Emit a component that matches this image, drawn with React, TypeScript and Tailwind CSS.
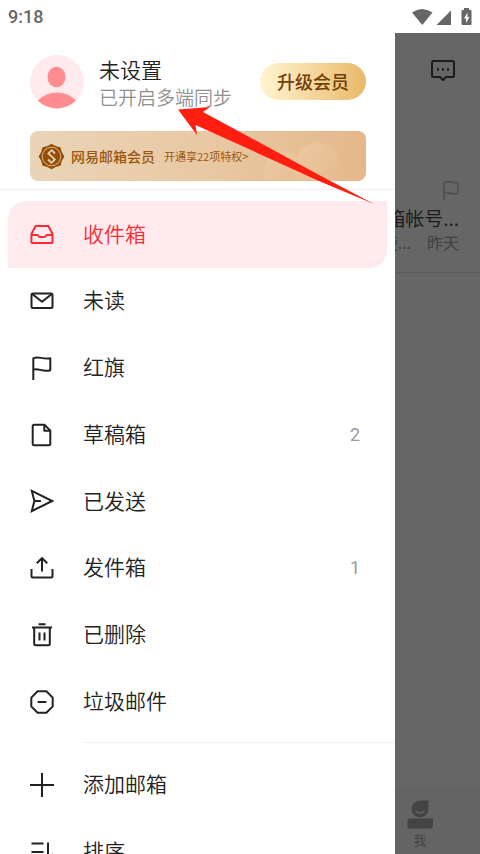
import type { ReactNode } from 'react';

type Folder = {
  name: string;
  icon: ReactNode;
  count?: number;
  active?: boolean;
};

function Icon({ children }: { children: ReactNode }) {
  return (
    <svg
      className="h-6 w-6 shrink-0"
      viewBox="0 0 24 24"
      fill="none"
      stroke="currentColor"
      strokeWidth="2"
      strokeLinejoin="round"
      aria-hidden="true"
    >
      {children}
    </svg>
  );
}

const folders: Folder[] = [
  {
    name: '收件箱',
    active: true,
    icon: (
      <Icon>
        <path d="M5.600 4h12.800L22.500 12v7.400a1.600 1.600 0 0 1-1.600 1.600H3a1.600 1.600 0 0 1-1.600-1.600V12z" />
        <path d="M1.400 13h6.200c.600 0 .900 2 2.200 2h4.600c1.300 0 1.600-2 2.200-2h6" />
      </Icon>
    ),
  },
  {
    name: '未读',
    icon: (
      <Icon>
        <rect x="1.500" y="4.500" width="21" height="14.500" rx="1.500" />
        <path d="M2.500 5.200l9.500 7.500 9.500-7.500" />
      </Icon>
    ),
  },
  {
    name: '红旗',
    icon: (
      <Icon>
        <path d="M3.300 24V2.300c5-2.800 9 1.500 17 0v11.900c-8 2.300-11.500-2.600-17-.600" />
      </Icon>
    ),
  },
  {
    name: '草稿箱',
    count: 2,
    icon: (
      <Icon>
        <path d="M14.500 1.800H4.200a1.500 1.500 0 0 0-1.500 1.500v17.400a1.500 1.500 0 0 0 1.500 1.500h14.600a1.500 1.500 0 0 0 1.500-1.500V7.600z" />
        <path d="M14.300 1.800v6h6" />
      </Icon>
    ),
  },
  {
    name: '已发送',
    icon: (
      <Icon>
        <path d="M1.800 1.900L22.200 12 1.800 22.100l2.600-10.100zM4.400 12h6.500" strokeLinejoin="miter" />
      </Icon>
    ),
  },
  {
    name: '发件箱',
    count: 1,
    icon: (
      <Icon>
        <path d="M1.500 13v7a1.500 1.500 0 0 0 1.500 1.500h18a1.500 1.500 0 0 0 1.500-1.500v-7M12 15.500V3M6.800 7.300L12 2.100l5.200 5.200" strokeLinejoin="miter" />
      </Icon>
    ),
  },
  {
    name: '已删除',
    icon: (
      <Icon>
        <path d="M8.500 1.200h7M2 4.500h20M4.200 4.500v16.300a1.500 1.500 0 0 0 1.500 1.500h12.600a1.500 1.500 0 0 0 1.500-1.500V4.500M9.500 9.500v8M14.500 9.500v8" />
      </Icon>
    ),
  },
  {
    name: '垃圾邮件',
    icon: (
      <Icon>
        <path d="M7.600 1.300h8.800l6.300 6.300v8.800l-6.300 6.300H7.600l-6.300-6.300V7.600zM7.600 12h8.800" />
      </Icon>
    ),
  },
];

const actions: Folder[] = [
  {
    name: '添加邮箱',
    icon: (
      <Icon>
        <path d="M12 0v24M0 12h24" />
      </Icon>
    ),
  },
  {
    name: '排序',
    icon: (
      <Icon>
        <path d="M1.500 3.500h12M1.500 12h12M1.500 20.500h12M18 2.500v18.500l5-7" />
      </Icon>
    ),
  },
];

function FolderRow({ name, icon, count, active }: Folder) {
  return (
    <li className="flex">
      <button
        className={
          active
            ? 'flex w-full items-center rounded-tl-[18px] rounded-br-[18px] bg-[#ffebee] pr-[27px] pl-[22px] text-[#fb2c36]'
            : 'flex w-full items-center pr-[27px] pl-[22px]'
        }
      >
        {icon}
        <span className="ml-[29px] pb-[2px] text-[21px] font-[350]">{name}</span>
        {count && <span className="ml-auto font-['Roboto'] text-lg text-[#999]">{count}</span>}
      </button>
    </li>
  );
}

function StatusBar() {
  return (
    <header className="flex h-[33px] shrink-0 items-center bg-white px-2 text-[#666]">
      <span className="font-['Roboto'] text-lg font-medium">9:18</span>
      <svg className="ml-auto h-5 w-[62px]" viewBox="0 0 62 20" fill="currentColor" aria-hidden="true">
        <path d="M2 5.500Q12 -1.500 22.500 5.500L12.300 18z" />
        <path d="M41 3.500V18H26.500z" />
        <path d="M54 1h5v2h1.500a1 1 0 0 1 1 1v13a1 1 0 0 1-1 1h-8a1 1 0 0 1-1-1V4a1 1 0 0 1 1-1H54z" />
        <path d="M57.500 5.500l-3.500 6h2v4.500l3.500-6h-2z" fill="#fff" />
      </svg>
    </header>
  );
}

function Profile() {
  return (
    <div className="flex items-center pt-5 pr-[29px] pl-[30px]">
      <svg className="h-[54px] w-[54px] shrink-0" viewBox="0 0 54 54" aria-hidden="true">
        <circle cx="27" cy="27" r="27" fill="#ffebee" />
        <ellipse cx="26.500" cy="22" rx="9" ry="10.300" fill="#ff8d8f" />
        <path d="M7.800 45.500Q16 37.500 27 37.500T46 45.500A27 27 0 0 1 7.800 45.500z" fill="#ff8d8f" />
      </svg>
      <div className="ml-[15px] pt-[2px]">
        <h1 className="text-[21px] leading-7 font-[350]">未设置</h1>
        <p className="text-[19px] leading-[27px] font-[350] text-[#909090]">已开启多端同步</p>
      </div>
      <button className="ml-auto h-[37px] rounded-full bg-linear-to-r from-[#fff5d0] to-[#e9b967] px-[17px] pb-[2px] text-lg font-medium text-[#713e0a]">
        升级会员
      </button>
    </div>
  );
}

function MemberBanner() {
  return (
    <a
      href="#member"
      className="relative mt-[21px] mr-[29px] ml-[30px] flex h-[50px] items-center overflow-hidden rounded-lg bg-linear-to-r from-[#ead4b8] via-[#e9c9a4] to-[#e4b88b] pl-2 text-[#9a5710]"
    >
      <svg className="absolute top-0 right-0 h-full w-[110px]" viewBox="0 0 110 50" aria-hidden="true">
        <defs>
          <linearGradient id="petal" x1="0" y1="0" x2="1" y2="1">
            <stop offset="0" stopColor="#f0d0aa" stopOpacity="0.700" />
            <stop offset="1" stopColor="#e8c096" stopOpacity="0.200" />
          </linearGradient>
        </defs>
        <path d="M10 50Q6 44 7 40Q10 34 11 29Q17 25 22 21Q30 22 36 21Q42 26 46 28V50z" fill="url(#petal)" />
        <path d="M38 50Q37 36 39 28Q44 24 45 17Q53 15 61 10Q68 14 76 15Q79 20 83 25Q81 38 79 50z" fill="url(#petal)" />
      </svg>
      <svg className="h-[27px] w-[27px] shrink-0" viewBox="0 0 27 27" fill="none" aria-hidden="true">
        <path
          d="M13.500 1.500Q17 4.300 22 5Q22.700 10 25.500 13.500Q22.700 17 22 22Q17 22.700 13.500 25.500Q10 22.700 5 22Q4.300 17 1.500 13.500Q4.300 10 5 5Q10 4.300 13.500 1.500z"
          fill="#934f08"
          stroke="#934f08"
          strokeWidth="1.500"
          strokeLinejoin="round"
        />
        <circle cx="13.500" cy="13.500" r="9.300" stroke="#e3c39a" strokeWidth="0.900" />
        <path d="M17 10.500l-3.300-3.300-3.300 3.200 6.400 6.200-3.300 3.200-3.500-3.300" stroke="#ead0ae" strokeWidth="1.800" />
      </svg>
      <span className="ml-[6px] text-sm font-medium">网易邮箱会员</span>
      <span className="ml-[9px] text-[11px]">开通享22项特权&gt;</span>
    </a>
  );
}

function Inbox() {
  return (
    <main className="flex min-w-0 flex-1 flex-col overflow-hidden bg-[#666] text-[#1c1c1c]">
      <button className="mt-6 mr-6 self-end" aria-label="消息">
        <svg className="h-[26px] w-[26px]" viewBox="0 0 26 26" fill="none" stroke="currentColor" strokeWidth="2" strokeLinejoin="round">
          <path d="M3.500 4h19a1.500 1.500 0 0 1 1.500 1.500v13a1.500 1.500 0 0 1-1.500 1.500H16l-3 3-3-3H3.500A1.500 1.500 0 0 1 2 18.500v-13A1.500 1.500 0 0 1 3.500 4z" />
          <path d="M7 12.500h2M12 12.500h2M17 12.500h2" strokeWidth="2.500" />
        </svg>
      </button>
      <article className="mt-24 flex flex-col items-end border-b border-[#5b5b5b] pr-[21px] pb-5 whitespace-nowrap">
        <svg className="h-6 w-4" viewBox="0 0 16 24" fill="none" stroke="#4d4d4d" strokeWidth="1.500" aria-hidden="true">
          <path d="M1 21V3.500c4-2.500 7 1 14 0v11c-7 1.500-10-2-14-1" />
        </svg>
        <h2 className="mt-px text-[19px] leading-7">箱帐号...</h2>
        <p className="text-base leading-5 text-[#414141]">
          使...<span className="ml-4">昨天</span>
        </p>
      </article>
      <nav className="mt-auto border-t border-[#606060] bg-[#646464] pt-2 pb-1">
        <a href="#me" className="ml-[11px] flex w-7 flex-col items-center text-[#444]">
          <svg className="h-[31px] w-[26px]" viewBox="0 0 26 31" fill="currentColor" aria-hidden="true">
            <path d="M13 1.500h8.500V10A8.500 8.500 0 1 1 13 1.500z" />
            <path d="M8.500 12q4.500 4 9 0" stroke="#646464" strokeWidth="1.500" fill="none" />
            <path d="M3.500 19.500H26V26a3.500 3.500 0 0 1-3.500 3.500H.500V22.500A3 3 0 0 1 3.500 19.500z" />
          </svg>
          <span className="text-[13px] leading-5">我</span>
        </a>
      </nav>
    </main>
  );
}

function App() {
  return (
    <div className="relative flex h-screen flex-col overflow-hidden bg-white font-['Noto_Sans_CJK_SC',sans-serif] text-[#222]">
      <StatusBar />
      <div className="flex min-h-0 flex-1">
        <aside className="w-[395px] shrink-0 overflow-hidden">
          <Profile />
          <MemberBanner />
          <hr className="mt-2 border-[#f0f0f0]" />
          <ul className="mx-2 mt-[11px] grid h-[534px] auto-rows-fr">
            {folders.map((folder) => (
              <FolderRow key={folder.name} {...folder} />
            ))}
          </ul>
          <hr className="mt-[7px] ml-[84px] border-[#f0f0f0]" />
          <ul className="mx-2 mt-2 grid h-[134px] auto-rows-fr">
            {actions.map((action) => (
              <FolderRow key={action.name} {...action} />
            ))}
          </ul>
        </aside>
        <Inbox />
      </div>
      {/* Pointer to the sync status line */}
      <svg className="pointer-events-none absolute top-[105px] left-[177px] h-[101px] w-[198px]" viewBox="177 105 198 101" fill="#ff1e0f" aria-hidden="true">
        <path d="M178 109.500L210 107L203 112L240 132L320 175.500L374 204L320 181.500L240 145L195.500 125L197 135z" />
      </svg>
    </div>
  );
}

export default App;
